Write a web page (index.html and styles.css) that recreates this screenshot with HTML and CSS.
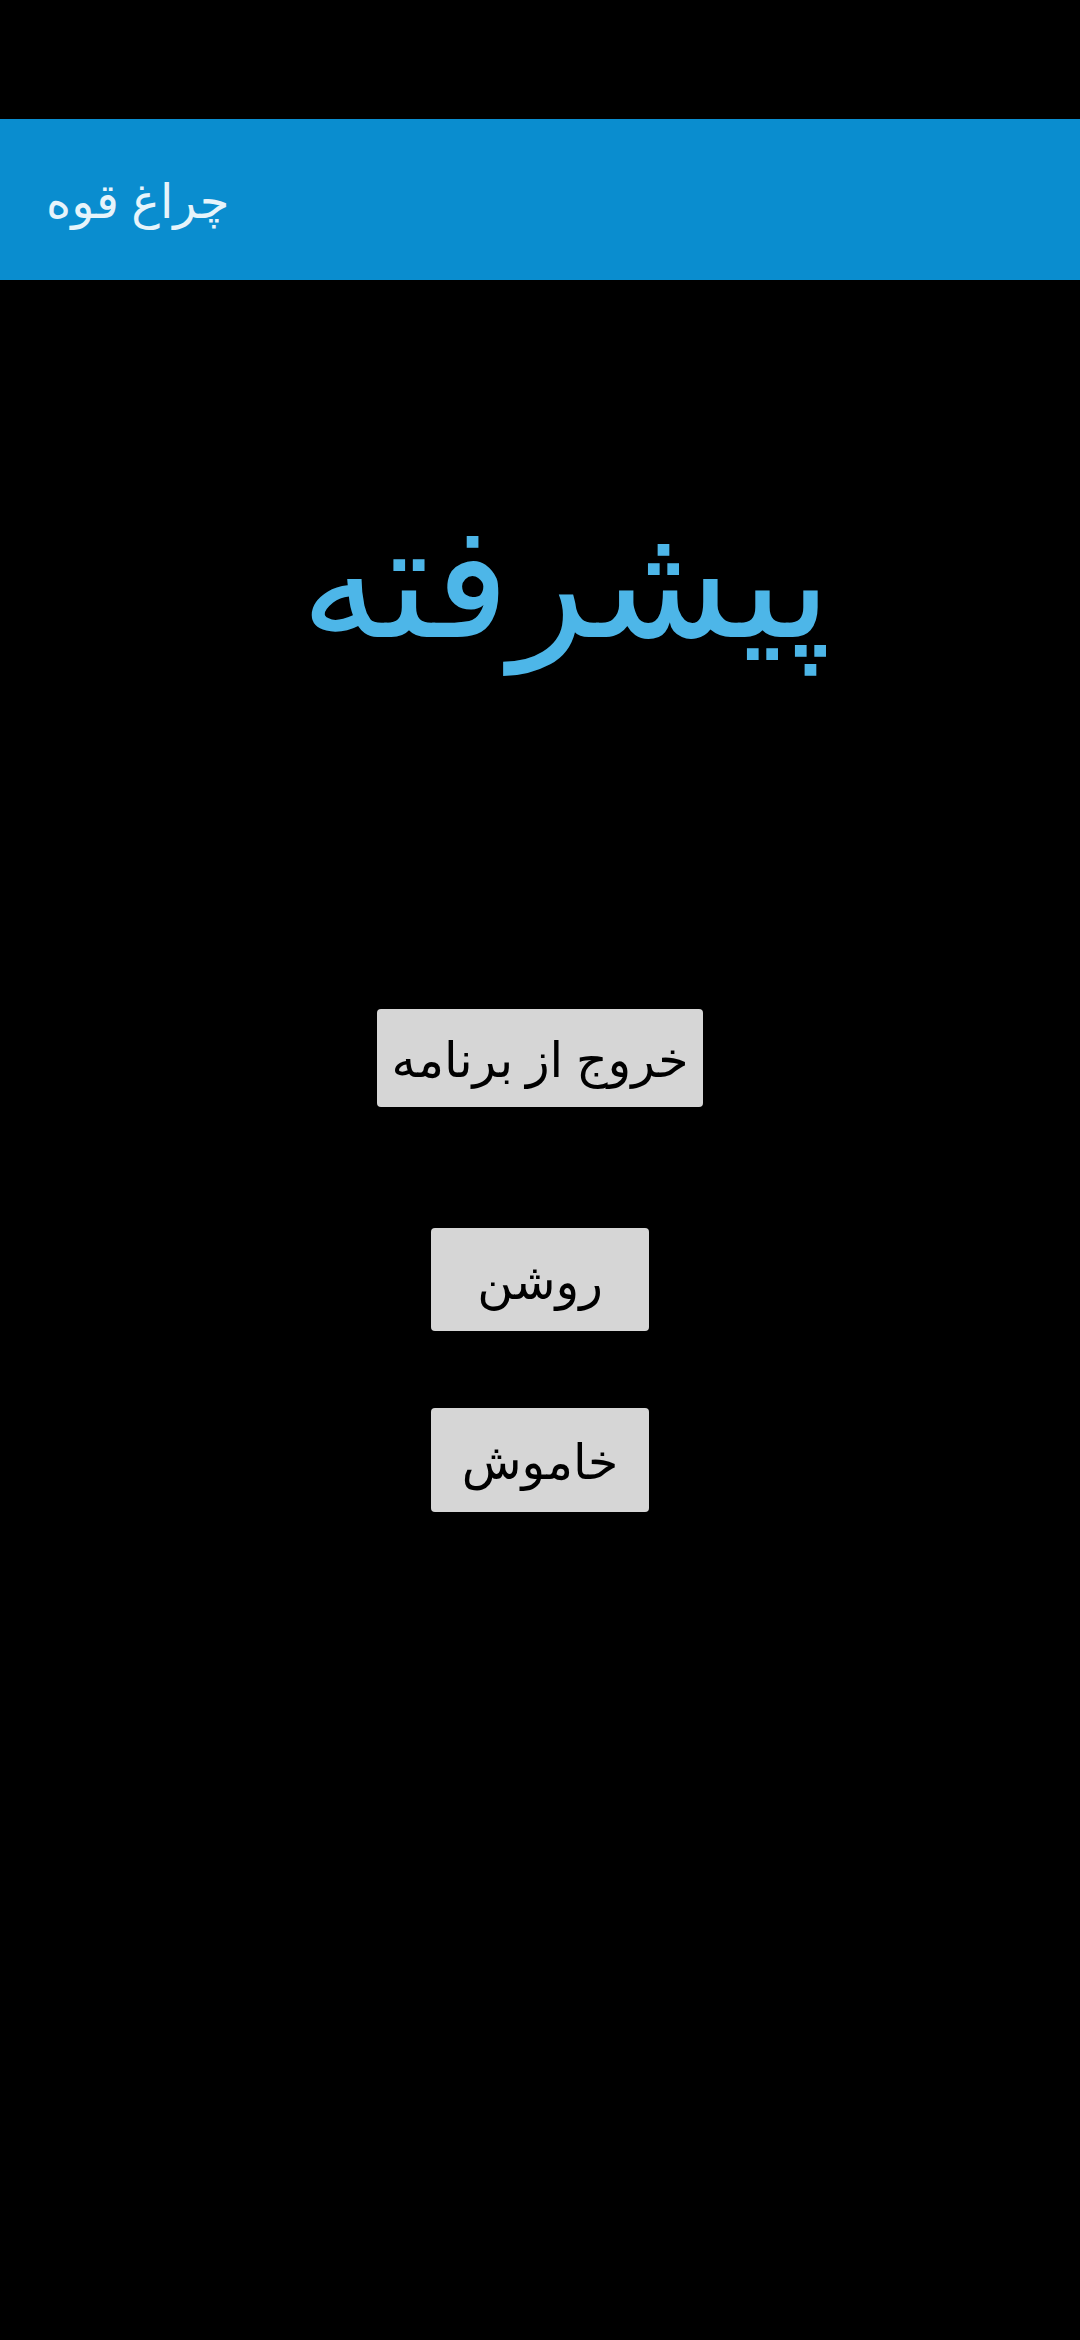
FILE: index.html
```html
<!DOCTYPE html>
<html lang="fa" dir="rtl">
<head>
<meta charset="utf-8">
<link rel="stylesheet" href="styles.css">
</head>
<body>
<div class="status"></div>
<header class="appbar"><span class="apptitle">چراغ قوه</span></header>
<main class="content">
  <h1 class="headline">پیشرفته</h1>
  <button class="btn btn-exit">خروج از برنامه</button>
  <button class="btn btn-on">روشن</button>
  <button class="btn btn-off">خاموش</button>
</main>
</body>
</html>
```
FILE: styles.css
```css
html, body {
  margin: 0;
  padding: 0;
  background: #000;
  width: 1080px;
  height: 2340px;
  overflow: hidden;
  font-family: "Noto Sans", "DejaVu Sans", sans-serif;
}
.status {
  height: 119px;
  background: #000;
}
.appbar {
  height: 161px;
  background: #0a8dcf;
  display: flex;
  align-items: center;
  direction: ltr;
  padding-left: 46px;
  box-sizing: border-box;
}
.apptitle {
  color: #e6f4fb;
  font-size: 48px;
  direction: rtl;
}
.content {
  display: flex;
  flex-direction: column;
  align-items: center;
}
.headline {
  margin: 196px 0 0 52px;
  color: #4db6e8;
  font-size: 159px;
  font-weight: normal;
  line-height: 200px;
  height: 200px;
}
.btn {
  background: #d6d6d6;
  border: none;
  border-radius: 4px;
  color: #000;
  font-family: inherit;
  font-size: 49px;
  padding: 0;
  display: flex;
  align-items: center;
  justify-content: center;
}
.btn-exit {
  margin-top: 333px;
  width: 326px;
  height: 98px;
}
.btn-on {
  margin-top: 121px;
  width: 218px;
  height: 103px;
}
.btn-off {
  margin-top: 77px;
  width: 218px;
  height: 104px;
}
```
